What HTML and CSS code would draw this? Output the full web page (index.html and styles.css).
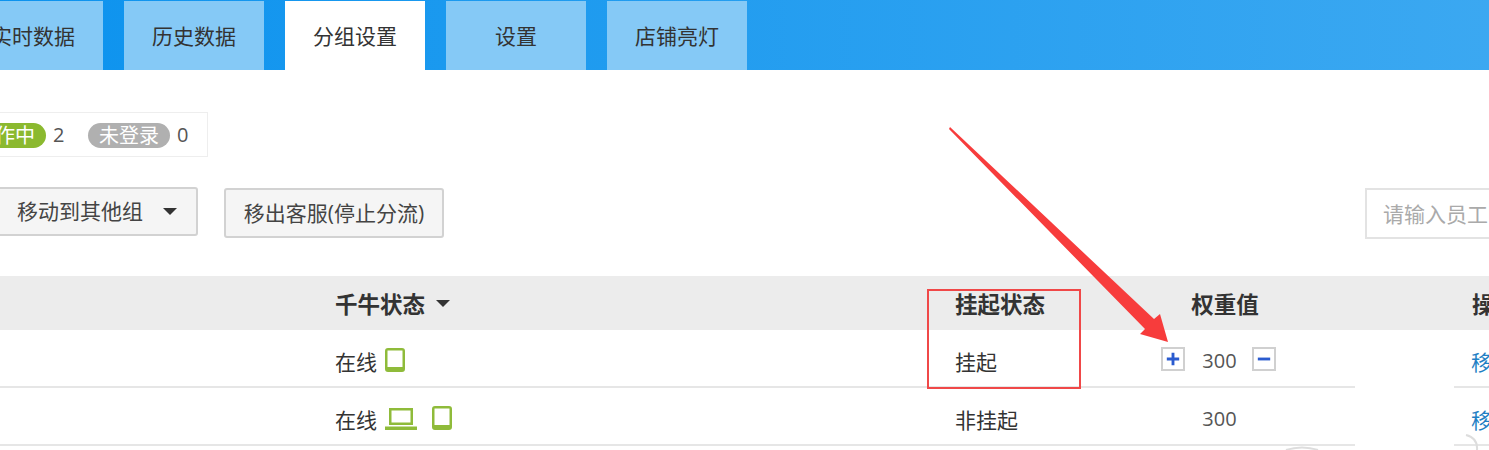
FILE: index.html
```html
<!DOCTYPE html>
<html lang="en">

<head>
    <meta charset="UTF-8">
    <meta name="viewport" content="width=device-width, initial-scale=1.0">
    <title>分组设置</title>
    <link rel="stylesheet" href="styles.css">
</head>

<body>
    <div class="page">
        <div class="nav">
            <a class="tab">实时数据</a>
            <a class="tab">历史数据</a>
            <a class="tab active">分组设置</a>
            <a class="tab">设置</a>
            <a class="tab">店铺亮灯</a>
        </div>

        <div class="status-box">
            <span class="badge green">工作中</span>
            <span class="count">2</span>
            <span class="badge grey">未登录</span>
            <span class="count">0</span>
        </div>

        <div class="actions">
            <button class="btn btn-move">移动到其他组<i class="caret"></i></button>
            <button class="btn btn-out">移出客服(停止分流)</button>
            <input class="search" placeholder="请输入员工旺旺">
        </div>

        <div class="table">
            <div class="row head">
                <div class="cell"></div>
                <div class="cell">千牛状态<i class="caret small"></i></div>
                <div class="cell">挂起状态</div>
                <div class="cell weight">权重值</div>
                <div class="cell op">操作</div>
            </div>
            <div class="row">
                <div class="cell"></div>
                <div class="cell">在线
                    <svg class="icon tablet" viewBox="0 0 20 24"><use href="#tablet"></use></svg>
                </div>
                <div class="cell">挂起</div>
                <div class="cell weight">
                    <span class="step">
                        <svg viewBox="0 0 21 21"><path d="M4 10.5h13M10.5 4v13"></path></svg>
                    </span>
                    <span class="num">300</span>
                    <span class="step">
                        <svg viewBox="0 0 21 21"><path d="M4 10.5h13"></path></svg>
                    </span>
                </div>
                <div class="cell op"><a>移动</a></div>
            </div>
            <div class="row">
                <div class="cell"></div>
                <div class="cell">在线
                    <svg class="icon laptop" viewBox="0 0 32 22">
                        <path d="M4 0h24v17h-24zM6.500 2.500v12h19v-12zM0 18.500h32v3.500h-32z" fill-rule="evenodd"></path>
                    </svg>
                    <svg class="icon tablet second" viewBox="0 0 20 24"><use href="#tablet"></use></svg>
                </div>
                <div class="cell">非挂起</div>
                <div class="cell weight"><span class="num">300</span></div>
                <div class="cell op"><a>移动</a></div>
            </div>
        </div>

        <!-- red annotation drawn on top of the screenshot -->
        <div class="mark-box"></div>
        <svg class="mark-arrow" viewBox="0 0 1489 450">
            <polygon points="950,127 1154,319 1160,314 1168,342 1140,334 1145,329 949,129"></polygon>
            <path class="arc" d="M1466 435q12 3 11 15"></path>
            <path class="arc" d="M1286 450q16-5 32 0"></path>
        </svg>

        <svg class="defs" width="0" height="0">
            <symbol id="tablet" viewBox="0 0 20 24">
                <path d="M3 0h14a3 3 0 0 1 3 3v18a3 3 0 0 1-3 3h-14a3 3 0 0 1-3-3v-18a3 3 0 0 1 3-3zM2.500 2.500v16.500h15v-16.500z" fill-rule="evenodd"></path>
            </symbol>
        </svg>
    </div>
</body>

</html>
```

FILE: styles.css
```css
* {
  margin: 0;
  padding: 0;
  box-sizing: border-box;
}

html,
body {
  height: 450px;
  overflow: hidden;
}

body {
  font-family: "Open Sans", "Noto Sans CJK SC", sans-serif;
  font-size: 21px;
  color: #333;
  background-color: #fff;
}

.page {
  position: relative;
  width: 1489px;
  height: 450px;
  overflow: hidden;
}

/* top tabs */
.nav {
  display: flex;
  gap: 21px;
  height: 70px;
  padding-top: 1px;
  margin-left: -37px;
  width: 1526px;
  background: linear-gradient(to right, #0b92ee, #3ba8f1);
}

.tab {
  display: flex;
  justify-content: center;
  align-items: center;
  width: 140px;
  padding-bottom: 1px;
  background-color: #85c9f6;
}

.tab.active {
  background-color: #fff;
}

/* status counters */
.status-box {
  display: flex;
  align-items: center;
  width: 245px;
  height: 45px;
  margin-top: 42px;
  margin-left: -37px;
  border: 1px solid #eee;
  color: #555;
}

.badge {
  flex: none;
  width: 82px;
  height: 25px;
  line-height: 25px;
  margin-top: 1px;
  border-radius: 13px;
  font-size: 20px;
  text-align: center;
  color: #fff;
}

.badge.green {
  background-color: #8bb92f;
}

.badge.grey {
  background-color: #b0b0b0;
}

.count {
  flex: none;
  width: 42px;
  padding-left: 7px;
  font-size: 20px;
}

/* buttons + search */
.actions {
  display: flex;
  align-items: flex-start;
  width: 1489px;
  height: 52px;
  margin-top: 30px;
}

.btn {
  flex: none;
  font-family: inherit;
  font-size: 21px;
  color: #444;
  white-space: nowrap;
  background-color: #f5f5f5;
  border: 2px solid #d2d2d2;
  border-radius: 3px;
}

.btn-move {
  display: flex;
  align-items: center;
  width: 228px;
  height: 49px;
  margin-left: -30px;
  padding-left: 45px;
  padding-bottom: 3px;
}

.btn-out {
  width: 220px;
  height: 50px;
  margin-top: 1px;
  margin-left: 26px;
  padding-bottom: 3px;
}

.caret {
  display: inline-block;
  width: 0;
  height: 0;
  margin-left: 20px;
  border-top: 7px solid #333;
  border-left: 7px solid transparent;
  border-right: 7px solid transparent;
}

.btn-move .caret {
  margin-top: 3px;
}

.caret.small {
  margin-left: 11px;
  vertical-align: 3px;
}

.search {
  flex: none;
  width: 240px;
  height: 51px;
  margin-top: 1px;
  margin-left: 921px;
  padding-left: 16px;
  font-family: inherit;
  font-size: 21px;
  border: 2px solid #e3e3e3;
  outline: none;
}

.search::placeholder {
  color: #aaa;
}

/* table */
.table {
  margin-top: 37px;
}

.row {
  display: grid;
  grid-template-columns: 335px 620px 175px 225px 99px 135px;
  height: 58px;
}

.cell {
  display: flex;
  align-items: center;
  padding-top: 5px;
  border-bottom: 2px solid #e6e6e6;
  white-space: nowrap;
}

.cell:first-child {
  grid-column: 1;
}

.op {
  grid-column: 6;
  padding-left: 17px;
}

.op a {
  color: #1f7fc4;
}

.head {
  height: 54px;
  background-color: #ececec;
  font-size: 22.500px;
  font-weight: bold;
}

.head .cell {
  padding-top: 1px;
  padding-left: 0;
  border-bottom: none;
}

.head .op {
  padding-left: 18px;
}

.weight {
  justify-content: center;
  padding-right: 48px;
}

.head .weight {
  padding-right: 35px;
}

.num {
  margin: 0 15px 0 17px;
  font-size: 20px;
  color: #555;
}

.step {
  display: block;
  width: 24px;
  height: 24px;
  margin-top: -3px;
  border: 2px solid #d0d0d0;
}

.step svg {
  display: block;
  width: 20px;
  height: 20px;
}

.step path {
  fill: none;
  stroke: #2a5bcf;
  stroke-width: 3;
}

.icon {
  display: block;
  margin-top: -1px;
  fill: #8fbb3a;
}

.tablet {
  width: 20px;
  height: 24px;
  margin-left: 8px;
}

.laptop {
  width: 32px;
  height: 22px;
  margin-top: 1px;
  margin-left: 8px;
}

.tablet.second {
  margin-left: 15px;
}

.defs {
  position: absolute;
}

/* annotation overlay */
.mark-box {
  position: absolute;
  left: 927px;
  top: 289px;
  width: 154px;
  height: 100px;
  border: 2px solid #f04848;
}

.mark-arrow {
  position: absolute;
  left: 0;
  top: 0;
  width: 1489px;
  height: 450px;
  fill: #f73c3c;
}

.arc {
  fill: none;
  stroke: #ddd;
  stroke-width: 2;
}
```
